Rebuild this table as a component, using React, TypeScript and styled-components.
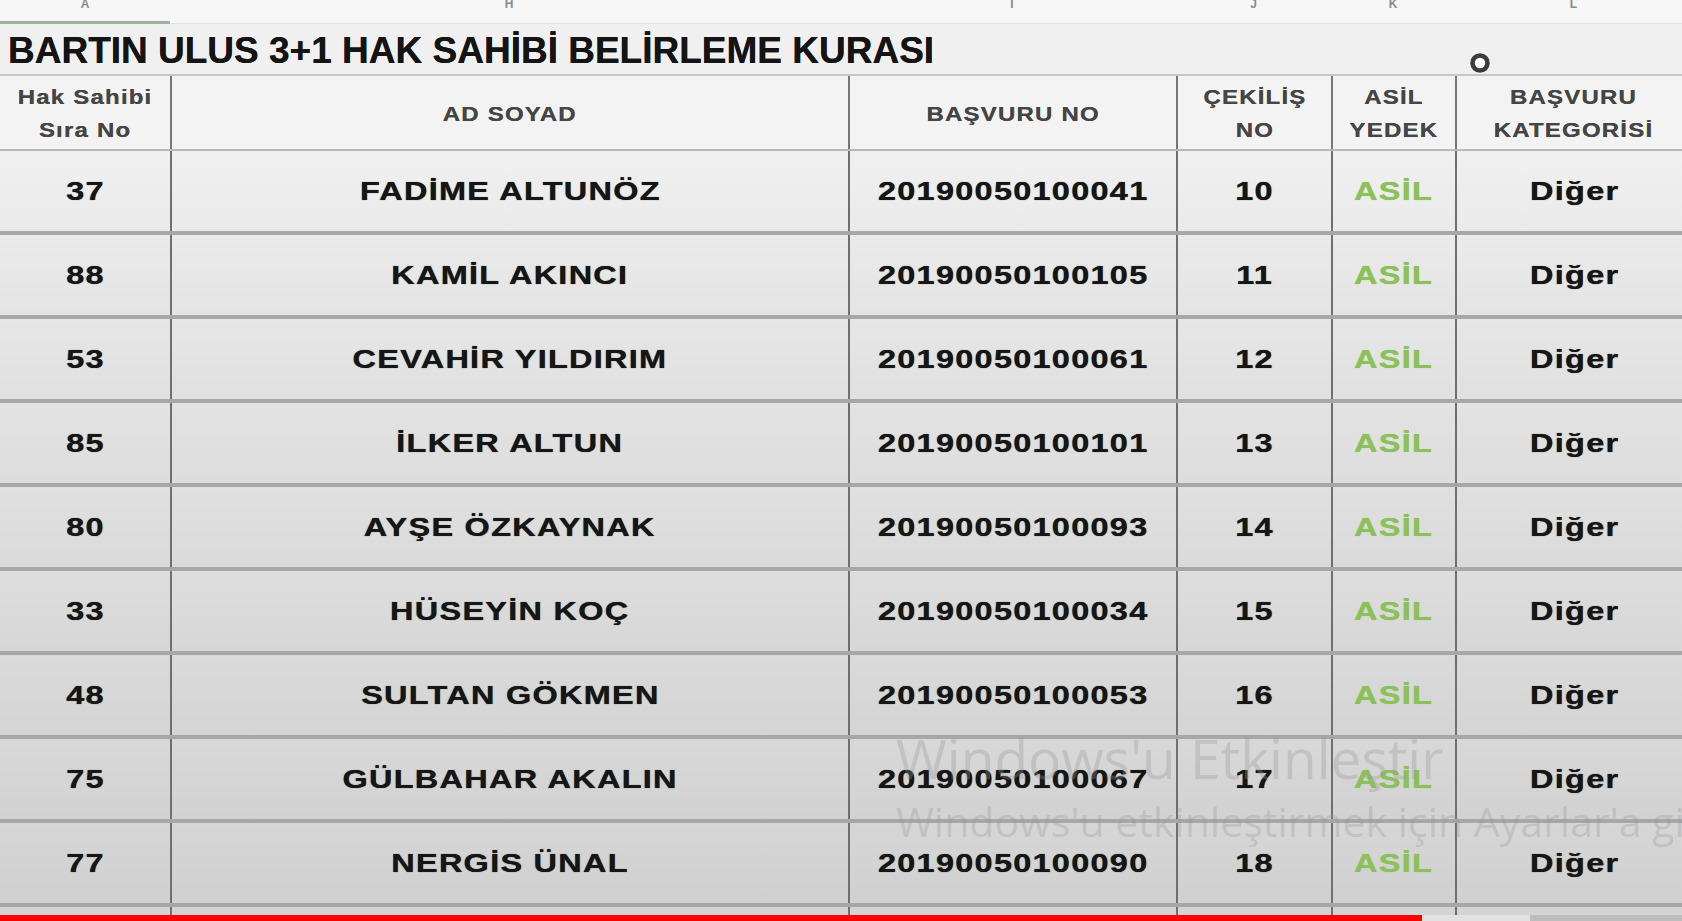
import React from "react";
import styled, { createGlobalStyle } from "styled-components";

const Global = createGlobalStyle`
  html, body { margin: 0; padding: 0; background: #e4e4e4; }
  #root { width: 1682px; height: 921px; }
`;

const COLS = "170px 678px 328px 155px 124px 1fr";

const Page = styled.div`
  position: relative;
  width: 1682px;
  height: 921px;
  overflow: hidden;
  background: #e6e6e6;
  font-family: "Liberation Sans", Arial, sans-serif;
  display: flex;
  flex-direction: column;
`;

const LetterBar = styled.div`
  display: grid;
  grid-template-columns: ${COLS};
  height: 24px;
  background: #f6f7f6;
  overflow: hidden;
`;

const Letter = styled.div<{ $selected?: boolean; $last?: boolean }>`
  display: flex;
  justify-content: center;
  align-items: flex-start;
  padding-left: ${(p) => (p.$last ? "10px" : "0")};
  font-size: 12px;
  line-height: 12px;
  color: #8a8a8a;
  font-weight: bold;
  border-bottom: ${(p) => (p.$selected ? "3px solid #9cb39e" : "1px solid #e2e2e2")};
  & > span { margin-top: -2px; }
`;

const TitleRow = styled.div`
  height: 52px;
  display: flex;
  align-items: center;
  padding: 4px 0 0 8px;
  background: #f0f0f0;
  border-bottom: 2px solid #c6c6c6;
  box-sizing: border-box;
`;

const Title = styled.h1`
  margin: 0;
  font-size: 37px;
  font-weight: bold;
  color: #141414;
  letter-spacing: 0;
  white-space: nowrap;
  text-shadow: 0 0 0.6px #141414;
`;

const HeaderRow = styled.div`
  display: grid;
  grid-template-columns: ${COLS};
  height: 75px;
  background: #f3f3f3;
  border-bottom: 2px solid #b9b9b9;
  box-sizing: border-box;
`;

const HeadCell = styled.div<{ $first?: boolean; $last?: boolean }>`
  display: flex;
  align-items: center;
  justify-content: center;
  padding-top: 3px;
  padding-left: ${(p) => (p.$last ? "8px" : "0")};
  text-align: center;
  border-left: ${(p) => (p.$first ? "none" : "2px solid #767676")};
`;

const HeadText = styled.span`
  display: inline-block;
  font-size: 20px;
  line-height: 33px;
  font-weight: bold;
  letter-spacing: 1px;
  color: #454545;
  transform: scaleX(1.2);
  text-shadow: 0 0 0.5px #454545;
`;

const DataRow = styled.div<{ $shade: number }>`
  display: grid;
  grid-template-columns: ${COLS};
  height: 84px;
  box-sizing: border-box;
  border-bottom: 4px solid #a7a7a7;
  background: linear-gradient(
    to bottom,
    rgb(${(p) => p.$shade + 6}, ${(p) => p.$shade + 6}, ${(p) => p.$shade + 6}),
    rgb(${(p) => p.$shade}, ${(p) => p.$shade}, ${(p) => p.$shade})
  );
`;

const Cell = styled.div<{ $first?: boolean; $last?: boolean }>`
  display: flex;
  align-items: center;
  justify-content: center;
  padding-left: ${(p) => (p.$last ? "10px" : "0")};
  border-left: ${(p) => (p.$first ? "none" : "2px solid #6f6f6f")};
  white-space: nowrap;
`;

const CellText = styled.span<{ $green?: boolean }>`
  display: inline-block;
  font-size: 26px;
  font-weight: bold;
  letter-spacing: 1px;
  transform: scaleX(1.25);
  color: ${(p) => (p.$green ? "#8cc05a" : "#161616")};
  text-shadow: 0 0 0.7px ${(p) => (p.$green ? "#8cc05a" : "#161616")};
`;

const BottomStrip = styled.div`
  display: grid;
  grid-template-columns: ${COLS};
  height: 8px;
  background: #d3d4d3;
`;

const StripCell = styled.div<{ $first?: boolean }>`
  border-left: ${(p) => (p.$first ? "none" : "2px solid #6f6f6f")};
`;

const Progress = styled.div`
  display: flex;
  height: 6px;
  background: #bdbdbd;
`;

const Played = styled.div`
  width: 1422px;
  background: #ff0000;
`;

const Buffered = styled.div`
  width: 108px;
  background: #e2e2e2;
`;

const Watermark = styled.div`
  position: absolute;
  left: 896px;
  top: 728px;
  font-family: "Open Sans", "Noto Sans", sans-serif;
  color: rgba(150, 150, 150, 0.32);
  pointer-events: none;
  white-space: nowrap;
  display: flex;
  flex-direction: column;
  gap: 10px;
`;

const WmBig = styled.div`
  font-size: 55px;
  line-height: 60px;
`;

const WmSmall = styled.div`
  font-size: 41px;
  line-height: 46px;
`;

const Cursor = styled.svg`
  position: absolute;
  left: 1468px;
  top: 51px;
`;

const letters = ["A", "H", "I", "J", "K", "L"];

const rows = [
  ["37", "FADİME ALTUNÖZ", "20190050100041", "10"],
  ["88", "KAMİL AKINCI", "20190050100105", "11"],
  ["53", "CEVAHİR YILDIRIM", "20190050100061", "12"],
  ["85", "İLKER ALTUN", "20190050100101", "13"],
  ["80", "AYŞE ÖZKAYNAK", "20190050100093", "14"],
  ["33", "HÜSEYİN KOÇ", "20190050100034", "15"],
  ["48", "SULTAN GÖKMEN", "20190050100053", "16"],
  ["75", "GÜLBAHAR AKALIN", "20190050100067", "17"],
  ["77", "NERGİS ÜNAL", "20190050100090", "18"],
];

const shades = [234, 228, 224, 221, 218, 215, 212, 210, 208];

export default function App() {
  return (
    <Page>
      <Global />
      <LetterBar>
        {letters.map((l, i) => (
          <Letter key={l} $selected={i === 0} $last={i === letters.length - 1}>
            <span>{l}</span>
          </Letter>
        ))}
      </LetterBar>
      <TitleRow>
        <Title>BARTIN ULUS 3+1 HAK SAHİBİ BELİRLEME KURASI</Title>
      </TitleRow>
      <HeaderRow>
        <HeadCell $first>
          <HeadText>
            Hak Sahibi
            <br />
            Sıra No
          </HeadText>
        </HeadCell>
        <HeadCell>
          <HeadText>AD SOYAD</HeadText>
        </HeadCell>
        <HeadCell>
          <HeadText>BAŞVURU NO</HeadText>
        </HeadCell>
        <HeadCell>
          <HeadText>
            ÇEKİLİŞ
            <br />
            NO
          </HeadText>
        </HeadCell>
        <HeadCell>
          <HeadText>
            ASİL
            <br />
            YEDEK
          </HeadText>
        </HeadCell>
        <HeadCell $last>
          <HeadText>
            BAŞVURU
            <br />
            KATEGORİSİ
          </HeadText>
        </HeadCell>
      </HeaderRow>
      {rows.map((r, i) => (
        <DataRow key={r[0]} $shade={shades[i]}>
          <Cell $first>
            <CellText>{r[0]}</CellText>
          </Cell>
          <Cell>
            <CellText>{r[1]}</CellText>
          </Cell>
          <Cell>
            <CellText>{r[2]}</CellText>
          </Cell>
          <Cell>
            <CellText>{r[3]}</CellText>
          </Cell>
          <Cell>
            <CellText $green>ASİL</CellText>
          </Cell>
          <Cell $last>
            <CellText>Diğer</CellText>
          </Cell>
        </DataRow>
      ))}
      <BottomStrip>
        {letters.map((l, i) => (
          <StripCell key={l} $first={i === 0} />
        ))}
      </BottomStrip>
      <Progress>
        <Played />
        <Buffered />
      </Progress>
      <Watermark>
        <WmBig>Windows'u Etkinleştir</WmBig>
        <WmSmall>Windows'u etkinleştirmek için Ayarlar'a gidin.</WmSmall>
      </Watermark>
      <Cursor width="24" height="24" viewBox="0 0 24 24">
        <circle cx="12" cy="12" r="7.5" fill="#ffffff" stroke="#3c3c3c" strokeWidth="4.5" />
      </Cursor>
    </Page>
  );
}
